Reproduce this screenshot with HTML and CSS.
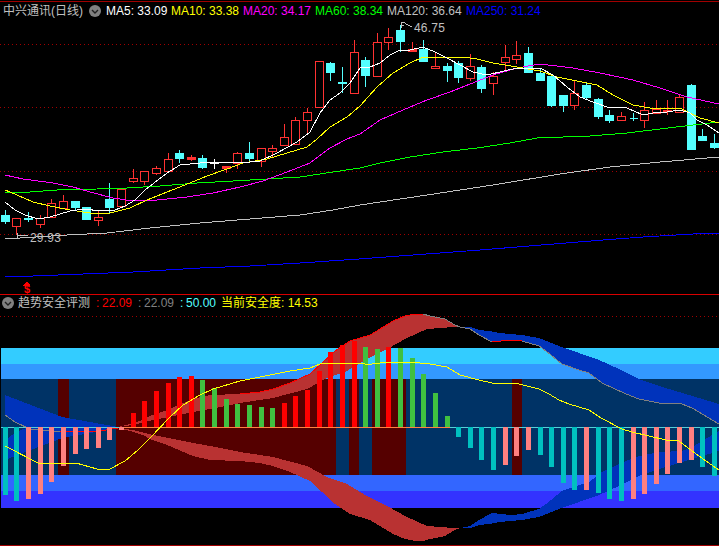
FILE: index.html
```html
<!DOCTYPE html>
<html lang="zh">
<head>
<meta charset="utf-8">
<title>中兴通讯 日线</title>
<link rel="stylesheet" href="styles.css">
</head>
<body>
<main class="terminal">
  <section class="pane pane-price">
    <header class="legend">
      <span class="title">中兴通讯(日线)</span>
      <span class="toggle toggle-main"><svg viewBox="0 0 12 12"><circle cx="6" cy="6" r="6" class="toggle-disc"/><path d="M3 5l3 3 3-3" class="toggle-mark"/></svg></span>
      <span class="item item-5 c-white">MA5: 33.09</span>
      <span class="item c-yellow">MA10: 33.38</span>
      <span class="item c-magenta">MA20: 34.17</span>
      <span class="item c-green">MA60: 38.34</span>
      <span class="item item-120 c-silver">MA120: 36.64</span>
      <span class="item item-120 c-blue">MA250: 31.24</span>
    </header>
    <svg class="chart" viewBox="0 0 719 295" width="719" height="295">
      <path class="frame" d="M0 1.5H719"/>
      <path class="frame-strong" d="M0 294.5H719"/>
      <path class="grid" d="M0 44.5H719M0 107.5H719M0 171.5H719M0 234.5H719"/>

      <path class="wick-red" d="M16.5 226V235M40.5 215V228M51.5 199V218M63.5 195V208M98.5 210V226M133.5 169V183M144.5 181V185M156.5 166V175M168.5 153V172M191.5 155V161M226.5 166V173M237.5 152V169M261.5 161V167M272.5 145V158M284.5 124V145M295.5 117V144M307.5 108V133M319.5 107V108M354.5 40V93M377.5 33V77M388.5 28V50M412.5 42V52M435.5 52V69M470.5 54V81M493.5 72V95M505.5 45V72M516.5 41V64M574.5 81V110M621.5 112V116M644.5 102V128M656.5 100V114M667.5 100V115M679.5 95V112"/>
      <path class="body-red" d="M12.5 218.5h8v8h-8zM36.5 218.5h8v6h-8zM47.5 203.5h8v14h-8zM59.5 201.5h8v7h-8zM94.5 217.5h8v3h-8zM117.5 189.5h8v17h-8zM129.5 178.5h8v3h-8zM140.5 171.5h8v10h-8zM152.5 168.5h8v5h-8zM164.5 159.5h8v12h-8zM233.5 153.5h8v10h-8zM257.5 148.5h8v13h-8zM268.5 148.5h8v3h-8zM280.5 137.5h8v8h-8zM291.5 120.5h8v24h-8zM303.5 112.5h8v8h-8zM315.5 61.5h8v46h-8zM350.5 52.5h8v41h-8zM373.5 42.5h8v34h-8zM384.5 37.5h8v5h-8zM431.5 66.5h8v2h-8zM466.5 66.5h8v12h-8zM489.5 76.5h8v7h-8zM501.5 57.5h8v5h-8zM512.5 55.5h8v4h-8zM570.5 93.5h8v12h-8zM617.5 116.5h8v4h-8zM640.5 110.5h8v10h-8zM652.5 109.5h8v4h-8zM675.5 97.5h8v15h-8z"/>
      <path class="solid-red" d="M187.5 157.5h8v2h-8zM222.5 166.5h8v2h-8zM408.5 49.5h8v2h-8zM663.5 110.5h8v1h-8z"/>

      <path class="wick-cyan" d="M5.5 210V224M28.5 212V222M75.5 207V211M109.5 183V214M179.5 150V163M202.5 155V169M249.5 142V162M330.5 62V81M342.5 67V93M365.5 57V87M400.5 25V52M423.5 40V62M447.5 63V82M458.5 61V83M481.5 65V93M528.5 47V71M540.5 68V81M551.5 105V107M563.5 105V112M586.5 82V99M598.5 98V119M609.5 110V123M633.5 113V121M691.5 84V85M702.5 129V141M714.5 134V149"/>
      <path class="solid-cyan" d="M1.5 215.5h8v6h-8zM24.5 218.5h8v1h-8zM71.5 201.5h8v6h-8zM82.5 207.5h8v12h-8zM105.5 199.5h8v8h-8zM175.5 153.5h8v5h-8zM198.5 158.5h8v9h-8zM245.5 153.5h8v5h-8zM326.5 63.5h8v9h-8zM338.5 82.5h8v1h-8zM361.5 60.5h8v15h-8zM396.5 30.5h8v11h-8zM419.5 49.5h8v12h-8zM443.5 66.5h8v4h-8zM454.5 63.5h8v14h-8zM477.5 67.5h8v21h-8zM524.5 53.5h8v19h-8zM536.5 73.5h8v7h-8zM547.5 76.5h8v29h-8zM559.5 95.5h8v10h-8zM582.5 85.5h8v12h-8zM594.5 99.5h8v17h-8zM605.5 115.5h8v5h-8zM629.5 118.5h8M687.5 85.5h8v64h-8zM698.5 136.5h8v4h-8zM710.5 143.5h8v4h-8z"/>
      <path class="cross-white" d="M214.5 159V169M210.5 162.5h8v1h-8z"/>

      <polyline class="ma ma-blue" points="5,277 33,276 83,274 133,272 200,268 250,266 300,263 359,259 480,250 603,240 643,237 693,234 719,233"/>
      <polyline class="ma ma-silver" points="5,239 67,235 107,233 150,228 200,223 250,219 300,215 333,210 360,205 427,195 493,185 560,174 610,167 660,162 719,157"/>
      <polyline class="ma ma-green" points="5,193 30,192 57,190 97,189 127,188 160,186 197,183 233,181 267,179 300,177 333,172 360,168 380,163 410,157 443,152 477,148 510,143 537,138 590,136 627,133 660,129 693,125 719,122"/>
      <polyline class="ma ma-magenta" points="5,175 23,179 53,183 73,187 90,192 113,198 133,201 157,200 187,197 213,193 240,187 263,181 287,172 310,163 330,148 347,139 360,134 380,120 403,110 427,100 450,92 460,88 493,75 517,68 540,64 573,68 600,73 633,80 660,88 687,97 719,104"/>
      <polyline class="ma ma-yellow" points="5,190 17,195 33,202 50,206 70,210 90,213 110,213 130,208 147,200 167,192 190,183 207,176 227,169 243,163 267,159 287,153 307,147 317,139 330,127 347,117 360,106 377,87 393,73 410,63 423,57 443,58 463,57 477,59 493,63 517,67 540,71 557,77 577,81 597,85 613,95 633,105 650,108 680,108 690,113 700,118 719,123"/>
      <polyline class="ma ma-white" points="5,202 15,210 25,215 38,219 50,217 60,214 70,211 85,209 100,211 115,210 125,206 135,200 145,190 167,173 180,165 200,163 220,162 240,163 260,161 277,153 297,142 310,132 320,113 330,100 340,93 350,83 360,68 370,67 380,63 390,55 400,50 410,50 423,47 435,52 447,58 460,65 473,72 487,75 517,68 540,68 553,75 567,87 580,97 593,102 607,107 627,108 643,115 653,113 667,112 680,110 690,113 697,120 707,125 719,133"/>

      <path class="pointer" d="M401.5 28V22.5H405M401.5 25.5H404M405 23.5L412 27"/>
      <text class="price-note" x="414" y="32">46.75</text>
      <path class="pointer" d="M17.5 238V233M17.5 235.5H28"/>
      <text class="price-note" x="30" y="242">29.93</text>

      <path class="signal-arrow" d="M27 281L23.5 285.5H30.5Z"/>
      <text class="signal-mark" x="27" y="293">$</text>
    </svg>
  </section>

  <section class="pane pane-index">
    <header class="legend legend-index">
      <span class="toggle toggle-index"><svg viewBox="0 0 12 12"><circle cx="6" cy="6" r="6" class="toggle-disc"/><path d="M3 5l3 3 3-3" class="toggle-mark"/></svg></span>
      <span class="title title-index">趋势安全评测</span>
      <span class="pair c-red"><i>:</i>22.09</span>
      <span class="pair c-gray"><i>:</i>22.09</span>
      <span class="pair c-cyan"><i>:</i>50.00</span>
      <span class="pair pair-last c-yellow">当前安全度: 14.53</span>
    </header>
    <svg class="chart" viewBox="0 295 719 251" width="719" height="251">
      <path class="grid" d="M0 316.5H719"/>
      <rect class="band-a" x="1" y="348" width="718" height="16"/>
      <rect class="band-b" x="1" y="364" width="718" height="15"/>
      <rect class="band-c" x="1" y="379" width="718" height="96"/>
      <path class="band-alert" d="M58 379h11v96h-11zM116 379h220v96h-220zM349 379h10v96h-10zM372 379h34v96h-34zM512 379h10v96h-10z"/>
      <rect class="band-d" x="1" y="475" width="718" height="16"/>
      <rect class="band-e" x="1" y="491" width="718" height="17"/>

      <g id="ribbon">
        <path class="ribbon-red" d="M118 427L130 424 143 420 150 416 167 410 193 399 210 395 240 394 260 392 273 389 290 383 310 374 322 363 335 351 350 341 370 335 380 329 393 321 405 316 415 314 423 314 430 316 445 319 455 325 460 327 453 327 427 329 407 338 387 349 367 359 347 371 327 378 307 389 273 398 240 403 210 409 183 414 153 420 133 425Z"/>
        <path class="ribbon-blue" d="M5 395L62 417 118 427 100 431 50 431 30 429 15 422 5 415ZM460 327L470 327 479 330 489 331 499 333 522 335 539 338 559 346 579 353 599 360 619 369 639 379 659 386 679 392 699 398 719 404V424L692 408 682 404 659 403 639 399 626 394 602 383 589 373 579 370 562 364 546 351 539 346 522 341 511 340 492 342 479 335 470 329Z"/>
      </g>
      <use href="#ribbon" transform="translate(0 855) scale(1 -1)"/>
      <path class="edge-gray" d="M5 415L15 422 30 429 50 431 60 431M100 431L118 428M423 314L430 316 445 319 455 325 460 327 470 329 479 335 492 342M522 341L539 346 546 351 562 364 579 370 589 373 602 383 626 394 639 399 659 403 682 404 692 408 719 424"/>
      <path class="edge-red" d="M60 431L100 431 118 428M240 394L260 392 273 389 290 383 310 374 322 363 335 351 350 341 370 335 380 329 393 321 405 316 415 314 423 314M492 342L511 340 522 341"/>

      <path class="base-cool" d="M1 427.5H124M450 427.5H719"/>
      <path class="base-warm" d="M124 427.5H450"/>
      <path class="bar-teal" d="M3 427h5V495h-5zM14 427h5V501h-5zM456 427h5V437h-5zM468 427h5V448h-5zM479 427h5V460h-5zM491 427h5V470h-5zM538 427h5V455h-5zM549 427h5V467h-5zM561 427h5V483h-5zM572 427h5V490h-5zM596 427h5V493h-5zM607 427h5V499h-5zM619 427h5V501h-5zM700 427h5V467h-5zM712 427h5V476h-5z"/>
      <path class="bar-pink" d="M26 427h5V499h-5zM38 427h5V494h-5zM49 427h5V482h-5zM61 427h5V466h-5zM73 427h5V454h-5zM84 427h5V449h-5zM96 427h5V448h-5zM107 427h5V440h-5zM119 427h5V430h-5zM503 427h5V465h-5zM514 427h5V456h-5zM526 427h5V450h-5zM584 427h5V490h-5zM631 427h5V499h-5zM642 427h5V494h-5zM654 427h5V484h-5zM665 427h5V474h-5zM677 427h5V463h-5zM689 427h5V460h-5z"/>
      <path class="bar-red" d="M131 413h5V427h-5zM142 401h5V427h-5zM154 391h5V427h-5zM166 383h5V427h-5zM177 377h5V427h-5zM189 376h5V427h-5zM282 403h5V427h-5zM293 396h5V427h-5zM305 390h5V427h-5zM317 371h5V427h-5zM328 352h5V427h-5zM340 345h5V427h-5zM352 341h5V427h-5zM386 347h5V427h-5z"/>
      <path class="bar-green" d="M200 380h5V427h-5zM212 388h5V427h-5zM224 399h5V427h-5zM235 404h5V427h-5zM247 405h5V427h-5zM259 407h5V427h-5zM270 408h5V427h-5zM363 347h5V427h-5zM375 349h5V427h-5zM398 348h5V427h-5zM410 358h5V427h-5zM421 374h5V427h-5zM433 393h5V427h-5zM445 416h5V427h-5z"/>

      <polyline class="ma ma-yellow" points="5,446 38,463 76,463 97,469 110,469 125,461 138,450 150,438 170,417 183,405 200,395 213,389 240,381 250,379 265,376 290,371 310,368 320,364 325,363 357,363 365,364 372,364 380,363 403,362 420,363 430,364 447,367 460,375 479,380 492,383 519,384 539,389 549,394 559,400 569,404 589,410 601,418 622,429 632,432 666,440 679,441 692,451 706,461 719,470"/>
      <path class="frame" d="M0 545.5H719"/>
    </svg>
  </section>
</main>
</body>
</html>
```

FILE: styles.css
```css
html, body {
  margin: 0;
  padding: 0;
  background: #000;
}

.terminal {
  width: 719px;
  height: 546px;
  display: flex;
  flex-direction: column;
  overflow: hidden;
  background: #000;
  font-family: "Liberation Sans", "Noto Sans CJK SC", sans-serif;
  font-size: 12px;
  line-height: 14px;
}

.pane { position: relative; flex: none; }
.pane-price { height: 295px; }
.pane-index { height: 251px; }

.chart {
  display: block;
  shape-rendering: crispEdges;
}

.legend {
  position: absolute;
  z-index: 1;
  top: 4px;
  left: 3px;
  display: flex;
  align-items: center;
  white-space: nowrap;
}

.legend-index { top: 1px; left: 2px; }

.title { color: #c0c0c0; width: 86px; }
.title-index { width: 78px; }

.toggle { display: block; width: 12px; height: 12px; flex: none; margin-right: 5px; }
.toggle-index { margin-right: 4px; }
.toggle svg { display: block; width: 12px; height: 12px; }
.toggle-disc { fill: #808080; }
.toggle-mark { fill: none; stroke: #202020; stroke-width: 1.4; }

.item { width: 72px; flex: none; }
.item-5 { width: 65px; }
.item-120 { width: 79px; }
.c-white { color: #fff; }
.c-yellow { color: #ff0; }
.c-magenta { color: #f0f; }
.c-green { color: #0f0; }
.c-silver { color: #c0c0c0; }
.c-blue { color: #00f; }
.c-red { color: #f00; }
.c-gray { color: #808080; }
.c-cyan { color: #54ffff; }

.pair { width: 42px; flex: none; }
.pair i { font-style: normal; display: inline-block; width: 6px; }
.pair-last { width: auto; margin-left: -1px; }

.frame { stroke: #a00000; fill: none; }
.frame-strong { stroke: #d80000; fill: none; }
.grid { stroke: #a00000; stroke-dasharray: 1 3; fill: none; }

.wick-red { stroke: #ff3232; fill: none; }
.body-red { stroke: #ff3232; fill: #000; }
.solid-red { stroke: #ff3232; fill: #ff3232; }
.wick-cyan { stroke: #54ffff; fill: none; }
.solid-cyan { stroke: #54ffff; fill: #54ffff; }
.cross-white { stroke: #fff; fill: #fff; }

.ma { fill: none; stroke-width: 1; }
.ma-white { stroke: #fff; }
.ma-yellow { stroke: #ff0; }
.ma-magenta { stroke: #f0f; }
.ma-green { stroke: #0f0; }
.ma-silver { stroke: #c0c0c0; }
.ma-blue { stroke: #00f; }

.pointer { fill: none; stroke: #c0c0c0; }
.price-note { fill: #c0c0c0; font-size: 12px; letter-spacing: 0.2px; }
.signal-arrow { fill: #f00; }
.signal-mark { fill: #f00; font-size: 11px; font-weight: 700; text-anchor: middle; }

.band-a { fill: #33ccff; }
.band-b { fill: #3399ff; }
.band-c { fill: #003366; }
.band-d { fill: #3366ff; }
.band-e { fill: #3333ff; }
.band-alert { fill: #550000; }

.ribbon-red { fill: #b93232; }
.ribbon-blue { fill: #0033bb; }
.edge-gray { fill: none; stroke: #808080; }
.edge-red { fill: none; stroke: #f00; }

.base-cool { stroke: #54d0d8; fill: none; }
.base-warm { stroke: #ff8040; fill: none; }
.bar-teal { fill: #00c0c0; }
.bar-pink { fill: #ff8080; }
.bar-red { fill: #f00; }
.bar-green { fill: #40c040; }
```
